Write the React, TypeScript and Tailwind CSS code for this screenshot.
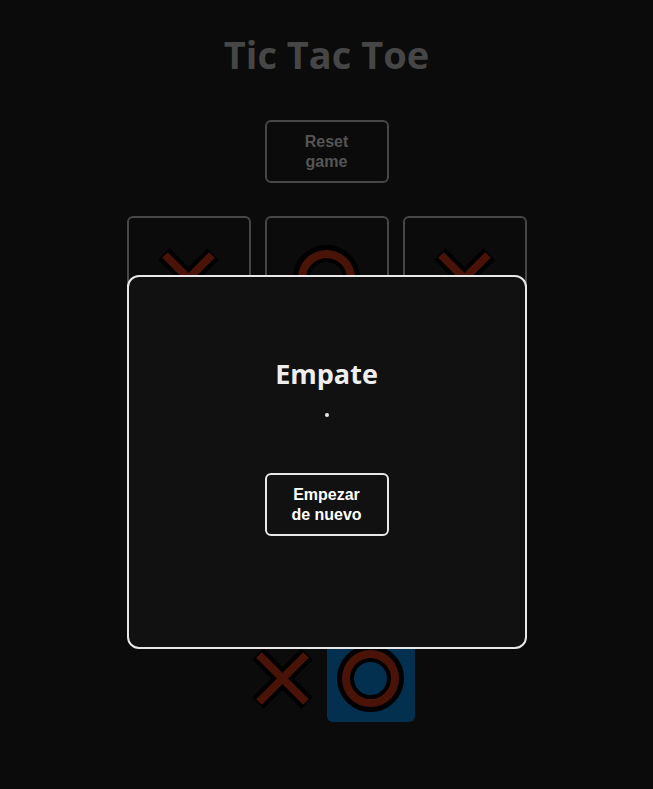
import React from 'react';

type Mark = 'x' | 'o';

const RED = '#4a1308';

function XMark() {
  return (
    <svg width="61" height="61" viewBox="0 0 61 61">
      <line x1="6" y1="6" x2="55" y2="55" stroke="#000" strokeWidth="16" />
      <line x1="55" y1="6" x2="6" y2="55" stroke="#000" strokeWidth="16" />
      <line x1="7" y1="7" x2="54" y2="54" stroke={RED} strokeWidth="8" />
      <line x1="54" y1="7" x2="7" y2="54" stroke={RED} strokeWidth="8" />
    </svg>
  );
}

function OMark() {
  return (
    <svg width="67" height="67" viewBox="0 0 67 67">
      <circle cx="33.5" cy="33.5" r="25" fill="none" stroke="#000" strokeWidth="17" />
      <circle cx="33.5" cy="33.5" r="24.5" fill="none" stroke={RED} strokeWidth="8" />
    </svg>
  );
}

const board: Mark[] = ['x', 'o', 'x', 'x', 'o', 'o', 'o', 'x', 'x'];

export default function App() {
  return (
    <div className="relative min-h-screen bg-[#0b0b0b] flex flex-col items-center pt-[30px] font-['Liberation_Sans',Arial,sans-serif]">
      <h1 className="text-[38px] leading-[48px] font-bold text-[#464646] font-['Open_Sans',sans-serif]">
        Tic Tac Toe
      </h1>

      <button className="mt-[42px] w-[124px] h-[63px] px-[16px] border-2 border-[#474747] rounded-md text-[#555] font-bold text-base leading-5">
        Reset game
      </button>

      <div className="mt-[33px] grid grid-cols-[124px_124px_124px] gap-x-[14px] gap-y-[14px]">
        {board.map((m, i) => (
          <div
            key={i}
            className="h-[124px] border-2 border-[#474747] rounded-md flex items-center justify-center"
          >
            {m === 'x' ? <XMark /> : <OMark />}
          </div>
        ))}
      </div>

      {/* turn indicator */}
      <div className="mt-[18px] flex">
        <div className="w-[88px] h-[88px] rounded-md flex items-center justify-center">
          <XMark />
        </div>
        <div className="w-[88px] h-[88px] rounded-md bg-[#03304f] flex items-center justify-center">
          <OMark />
        </div>
      </div>

      {/* winner modal */}
      <div className="absolute top-[275px] left-1/2 -translate-x-1/2 w-[400px] h-[374px] bg-[#111111] border-2 border-[#e8e8e8] rounded-xl flex flex-col items-center pt-[78px]">
        <h2 className="text-[27px] leading-[38px] font-bold text-[#eeeeee] font-['Open_Sans',sans-serif]">
          Empate
        </h2>
        <div className="mt-[20px] w-[4px] h-[4px] rounded-full bg-[#e8e8e8]" />
        <button className="mt-[56px] w-[124px] h-[63px] px-[16px] border-2 border-[#e8e8e8] rounded-md text-white font-bold text-base leading-5">
          Empezar de nuevo
        </button>
      </div>
    </div>
  );
}
